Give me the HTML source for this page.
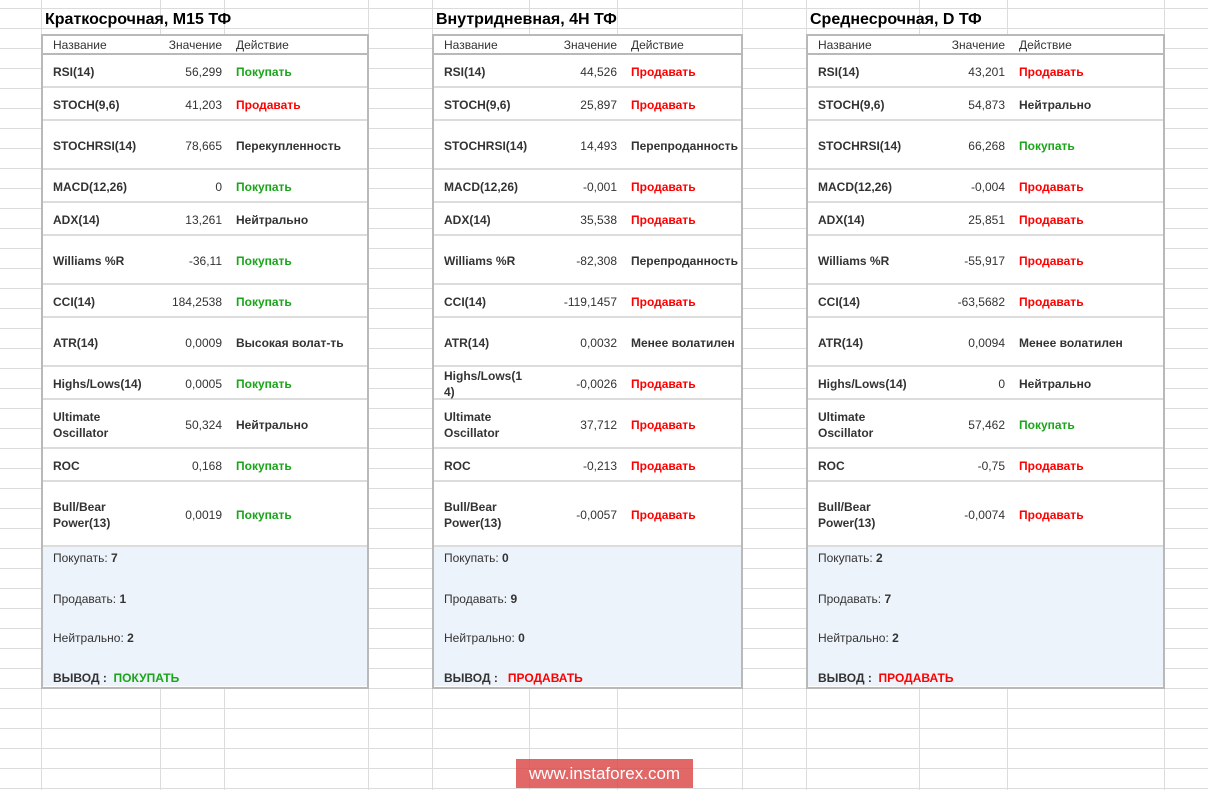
<!DOCTYPE html>
<html><head><meta charset="utf-8"><style>
body{margin:0;width:1208px;height:790px;overflow:hidden;background:#fff;font-family:"Liberation Sans",Arial,sans-serif;position:relative;
background-image:linear-gradient(#dcdcdc 1px,transparent 1px);background-size:100% 20px;background-position:0 8px;}
.vl{position:absolute;top:0;height:790px;width:1px;background:#dcdcdc}
.t{position:absolute;top:34px;height:655px;box-sizing:border-box;border:2px solid #b9b9b9;background:#fff}
.h{height:19px;box-sizing:border-box;border-bottom:2px solid #b9b9b9;display:flex;align-items:center;font-size:12px;color:#333}
.r{box-sizing:border-box;border-bottom:2px solid #dcdcdc;display:flex;align-items:center;font-size:12px;color:#333;padding-top:3px}
.n{box-sizing:border-box;padding-left:10px;font-weight:bold;line-height:16px}
.h .n{font-weight:normal}
.v{text-align:right}
.a{padding-left:14px;font-weight:bold}
.g{color:#1aa51a}.rd{color:#f00}
.s{background:#edf3fa;height:139px;position:relative;font-size:12px;color:#333}
.s div{position:absolute;left:10px}
.s b{color:#333}
.ttl{position:absolute;top:11px;font-size:16px;font-weight:bold;color:#000;font-family:"Liberation Sans",sans-serif}
.r33{height:33px}.r49{height:49px}.r65{height:65px}
</style></head><body>
<div class="vl" style="left:41px"></div><div class="vl" style="left:160px"></div><div class="vl" style="left:224px"></div><div class="vl" style="left:368px"></div>
<div class="vl" style="left:432px"></div><div class="vl" style="left:529px"></div><div class="vl" style="left:617px"></div><div class="vl" style="left:742px"></div>
<div class="vl" style="left:806px"></div><div class="vl" style="left:919px"></div><div class="vl" style="left:1007px"></div><div class="vl" style="left:1164px"></div>

<div class="ttl" style="left:45px">Краткосрочная, М15 ТФ</div>
<div class="ttl" style="left:436px">Внутридневная, 4H ТФ</div>
<div class="ttl" style="left:810px">Среднесрочная, D ТФ</div>

<!-- T1 -->
<div class="t" style="left:41px;width:328px">
<div class="h"><div class="n" style="width:115px">Название</div><div class="v" style="width:64px">Значение</div><div class="a" style="font-weight:normal">Действие</div></div>
<div class="r r33"><div class="n" style="width:115px">RSI(14)</div><div class="v" style="width:64px">56,299</div><div class="a g">Покупать</div></div>
<div class="r r33"><div class="n" style="width:115px">STOCH(9,6)</div><div class="v" style="width:64px">41,203</div><div class="a rd">Продавать</div></div>
<div class="r r49"><div class="n" style="width:115px">STOCHRSI(14)</div><div class="v" style="width:64px">78,665</div><div class="a">Перекупленность</div></div>
<div class="r r33"><div class="n" style="width:115px">MACD(12,26)</div><div class="v" style="width:64px">0</div><div class="a g">Покупать</div></div>
<div class="r r33"><div class="n" style="width:115px">ADX(14)</div><div class="v" style="width:64px">13,261</div><div class="a">Нейтрально</div></div>
<div class="r r49"><div class="n" style="width:115px">Williams %R</div><div class="v" style="width:64px">-36,11</div><div class="a g">Покупать</div></div>
<div class="r r33"><div class="n" style="width:115px">CCI(14)</div><div class="v" style="width:64px">184,2538</div><div class="a g">Покупать</div></div>
<div class="r r49"><div class="n" style="width:115px">ATR(14)</div><div class="v" style="width:64px">0,0009</div><div class="a">Высокая волат-ть</div></div>
<div class="r r33"><div class="n" style="width:115px">Highs/Lows(14)</div><div class="v" style="width:64px">0,0005</div><div class="a g">Покупать</div></div>
<div class="r r49"><div class="n" style="width:115px">Ultimate Oscillator</div><div class="v" style="width:64px">50,324</div><div class="a">Нейтрально</div></div>
<div class="r r33"><div class="n" style="width:115px">ROC</div><div class="v" style="width:64px">0,168</div><div class="a g">Покупать</div></div>
<div class="r r65"><div class="n" style="width:115px">Bull/Bear<br>Power(13)</div><div class="v" style="width:64px">0,0019</div><div class="a g">Покупать</div></div>
<div class="s"><div style="top:4px">Покупать: <b>7</b></div><div style="top:45px">Продавать: <b>1</b></div><div style="top:84px">Нейтрально: <b>2</b></div><div style="top:124px;font-weight:bold">ВЫВОД : &nbsp;<span class="g">ПОКУПАТЬ</span></div></div>
</div>

<!-- T2 -->
<div class="t" style="left:432px;width:311px">
<div class="h"><div class="n" style="width:116px">Название</div><div class="v" style="width:67px">Значение</div><div class="a" style="font-weight:normal">Действие</div></div>
<div class="r r33"><div class="n" style="width:116px">RSI(14)</div><div class="v" style="width:67px">44,526</div><div class="a rd">Продавать</div></div>
<div class="r r33"><div class="n" style="width:116px">STOCH(9,6)</div><div class="v" style="width:67px">25,897</div><div class="a rd">Продавать</div></div>
<div class="r r49"><div class="n" style="width:116px">STOCHRSI(14)</div><div class="v" style="width:67px">14,493</div><div class="a">Перепроданность</div></div>
<div class="r r33"><div class="n" style="width:116px">MACD(12,26)</div><div class="v" style="width:67px">-0,001</div><div class="a rd">Продавать</div></div>
<div class="r r33"><div class="n" style="width:116px">ADX(14)</div><div class="v" style="width:67px">35,538</div><div class="a rd">Продавать</div></div>
<div class="r r49"><div class="n" style="width:116px">Williams %R</div><div class="v" style="width:67px">-82,308</div><div class="a">Перепроданность</div></div>
<div class="r r33"><div class="n" style="width:116px">CCI(14)</div><div class="v" style="width:67px">-119,1457</div><div class="a rd">Продавать</div></div>
<div class="r r49"><div class="n" style="width:116px">ATR(14)</div><div class="v" style="width:67px">0,0032</div><div class="a">Менее волатилен</div></div>
<div class="r r33"><div class="n" style="width:116px">Highs/Lows(1<br>4)</div><div class="v" style="width:67px">-0,0026</div><div class="a rd">Продавать</div></div>
<div class="r r49"><div class="n" style="width:116px">Ultimate<br>Oscillator</div><div class="v" style="width:67px">37,712</div><div class="a rd">Продавать</div></div>
<div class="r r33"><div class="n" style="width:116px">ROC</div><div class="v" style="width:67px">-0,213</div><div class="a rd">Продавать</div></div>
<div class="r r65"><div class="n" style="width:116px">Bull/Bear<br>Power(13)</div><div class="v" style="width:67px">-0,0057</div><div class="a rd">Продавать</div></div>
<div class="s"><div style="top:4px">Покупать: <b>0</b></div><div style="top:45px">Продавать: <b>9</b></div><div style="top:84px">Нейтрально: <b>0</b></div><div style="top:124px;font-weight:bold">ВЫВОД : &nbsp;&nbsp;<span class="rd">ПРОДАВАТЬ</span></div></div>
</div>

<!-- T3 -->
<div class="t" style="left:806px;width:359px">
<div class="h"><div class="n" style="width:127px">Название</div><div class="v" style="width:70px">Значение</div><div class="a" style="font-weight:normal">Действие</div></div>
<div class="r r33"><div class="n" style="width:127px">RSI(14)</div><div class="v" style="width:70px">43,201</div><div class="a rd">Продавать</div></div>
<div class="r r33"><div class="n" style="width:127px">STOCH(9,6)</div><div class="v" style="width:70px">54,873</div><div class="a">Нейтрально</div></div>
<div class="r r49"><div class="n" style="width:127px">STOCHRSI(14)</div><div class="v" style="width:70px">66,268</div><div class="a g">Покупать</div></div>
<div class="r r33"><div class="n" style="width:127px">MACD(12,26)</div><div class="v" style="width:70px">-0,004</div><div class="a rd">Продавать</div></div>
<div class="r r33"><div class="n" style="width:127px">ADX(14)</div><div class="v" style="width:70px">25,851</div><div class="a rd">Продавать</div></div>
<div class="r r49"><div class="n" style="width:127px">Williams %R</div><div class="v" style="width:70px">-55,917</div><div class="a rd">Продавать</div></div>
<div class="r r33"><div class="n" style="width:127px">CCI(14)</div><div class="v" style="width:70px">-63,5682</div><div class="a rd">Продавать</div></div>
<div class="r r49"><div class="n" style="width:127px">ATR(14)</div><div class="v" style="width:70px">0,0094</div><div class="a">Менее волатилен</div></div>
<div class="r r33"><div class="n" style="width:127px">Highs/Lows(14)</div><div class="v" style="width:70px">0</div><div class="a">Нейтрально</div></div>
<div class="r r49"><div class="n" style="width:127px">Ultimate<br>Oscillator</div><div class="v" style="width:70px">57,462</div><div class="a g">Покупать</div></div>
<div class="r r33"><div class="n" style="width:127px">ROC</div><div class="v" style="width:70px">-0,75</div><div class="a rd">Продавать</div></div>
<div class="r r65"><div class="n" style="width:127px">Bull/Bear<br>Power(13)</div><div class="v" style="width:70px">-0,0074</div><div class="a rd">Продавать</div></div>
<div class="s"><div style="top:4px">Покупать: <b>2</b></div><div style="top:45px">Продавать: <b>7</b></div><div style="top:84px">Нейтрально: <b>2</b></div><div style="top:124px;font-weight:bold">ВЫВОД : &nbsp;<span class="rd">ПРОДАВАТЬ</span></div></div>
</div>

<div style="position:absolute;left:516px;top:759px;width:177px;height:29px;background:rgba(220,70,70,0.82);color:#fff;font-size:17px;line-height:29px;text-align:center">www.instaforex.com</div>
</body></html>
